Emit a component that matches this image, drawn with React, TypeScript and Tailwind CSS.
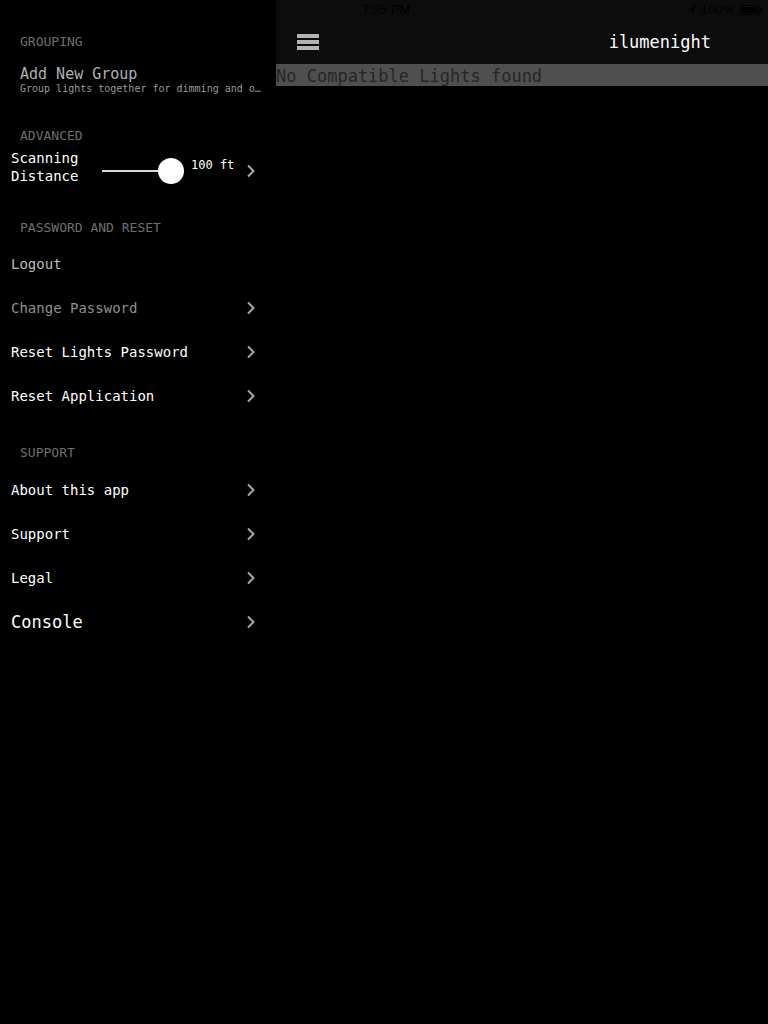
import type { ReactNode } from 'react'

const mono = { fontFamily: '"DejaVu Sans Mono", "Liberation Mono", monospace' }

function Chevron({ className = '' }: { className?: string }) {
  return (
    <svg width="10" height="14" viewBox="0 0 10 14" className={`shrink-0 ${className}`}>
      <path d="M2 1.5 L7.5 7 L2 12.5" fill="none" stroke="#a8a8a8" strokeWidth="2" />
    </svg>
  )
}

function SectionHeader({ children, className = '' }: { children: ReactNode; className?: string }) {
  return (
    <div className={`pl-5 text-[13px] leading-4 text-[#6f6f6f] ${className}`} style={mono}>
      {children}
    </div>
  )
}

function Row({
  label,
  tone = 'text-white',
  size = 'text-[14px]',
  chevron = true,
}: {
  label: string
  tone?: string
  size?: string
  chevron?: boolean
}) {
  return (
    <div className="flex h-11 items-center justify-between pl-[11px] pr-5">
      <span className={`${size} ${tone}`} style={mono}>
        {label}
      </span>
      {chevron && <Chevron />}
    </div>
  )
}

function Sidebar() {
  return (
    <aside className="w-[276px] shrink-0 bg-black">
      <SectionHeader className="pt-[34px]">GROUPING</SectionHeader>

      <div className="pl-5 pr-[12px] pt-[16px]">
        <div className="text-[15px] leading-[17px] text-[#b0b0b0]" style={mono}>
          Add New Group
        </div>
        <div className="truncate text-[10px] leading-3 text-[#9a9a9a]" style={mono}>
          Group lights together for dimming and other settings
        </div>
      </div>

      <SectionHeader className="pt-[33px]">ADVANCED</SectionHeader>

      {/* scanning distance slider */}
      <div className="mt-[4px] flex h-[38px] items-center pl-[11px] pr-5">
        <div className="w-[91px] text-[14px] leading-[18px] text-white" style={mono}>
          Scanning
          <br />
          Distance
        </div>
        <div className="relative mt-[8px] flex h-[26px] w-[83px] items-center">
          <div className="h-[2px] w-[70px] bg-[#d8d8d8]" />
          <div className="absolute left-[56px] top-0 h-[26px] w-[26px] rounded-full bg-white" />
        </div>
        <div className="-mt-[4px] ml-[6px] flex-1 text-[12px] text-white" style={mono}>
          100 ft
        </div>
        <Chevron className="mt-[8px]" />
      </div>

      <SectionHeader className="pt-[34px]">PASSWORD AND RESET</SectionHeader>
      <div className="pt-[6px]">
        <Row label="Logout" tone="text-[#bdbdbd]" chevron={false} />
        <Row label="Change Password" tone="text-[#8f8f8f]" />
        <Row label="Reset Lights Password" />
        <Row label="Reset Application" />
      </div>

      <SectionHeader className="pt-[27px]">SUPPORT</SectionHeader>
      <div className="pt-[7px]">
        <Row label="About this app" />
        <Row label="Support" />
        <Row label="Legal" />
        <Row label="Console" size="text-[17px] pt-[2px]" />
      </div>
    </aside>
  )
}

function StatusBar() {
  return (
    <div
      className="relative flex h-5 items-center text-[13px] text-black"
      style={{ fontFamily: '"Liberation Sans", Arial, sans-serif' }}
    >
      <span className="ml-[86px]">7:35 PM</span>
      <div className="ml-auto mr-[6px] flex items-center gap-[5px]">
        <svg width="9" height="9" viewBox="0 0 10 10">
          <path d="M10 0 L0 4.5 L5 5 L5.5 10 Z" fill="#000" />
        </svg>
        <span>100%</span>
        <div className="flex items-center">
          <div className="h-[10px] w-[21px] rounded-[2px] border border-black p-[1px]">
            <div className="h-full w-full bg-black" />
          </div>
          <div className="h-[4px] w-[2px] bg-black" />
        </div>
      </div>
    </div>
  )
}

function Main() {
  return (
    <main className="flex-1 bg-black">
      <div className="bg-[#0c0c0c]">
        <StatusBar />
        <div className="flex h-11 items-center justify-between pl-[21px] pr-[57px]">
          <div className="flex w-[22px] flex-col gap-[2px]">
            <div className="h-[4px] bg-[#b3b3b3]" />
            <div className="h-[4px] bg-[#b3b3b3]" />
            <div className="h-[4px] bg-[#b3b3b3]" />
          </div>
          <span className="pt-[2px] text-[17px] text-white" style={mono}>
            ilumenight
          </span>
        </div>
      </div>
      <div className="flex h-[22px] items-center bg-[#4f4f4f] pt-[4px]">
        <span className="text-[17px] text-[#262626]" style={mono}>
          No Compatible Lights found
        </span>
      </div>
    </main>
  )
}

export default function App() {
  return (
    <div className="flex h-[1024px] w-[768px] overflow-hidden bg-black">
      <Sidebar />
      <Main />
    </div>
  )
}
